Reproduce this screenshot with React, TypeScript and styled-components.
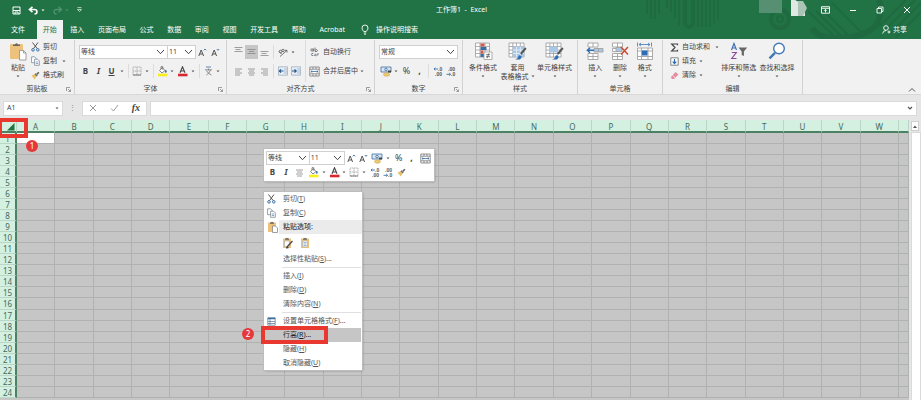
import React from "react";
import styled, { createGlobalStyle } from "styled-components";

const font = `"Noto Sans", "Noto Sans CJK SC", sans-serif`;
const green = "#217346";
const ink = "#444444";
const blue = "#3a6fa5";

const Global = createGlobalStyle`
  * { box-sizing: border-box; }
  body { margin: 0; background: #e6e6e6; overflow: hidden; }
  button, input, select { font: inherit; color: inherit; border: 0; padding: 0; margin: 0; background: none; border-radius: 0; }
  svg { display: block; flex: none; }
`;

const Page = styled.div`
  min-height: 100vh;
  display: flex;
  flex-direction: column;
  font-family: ${font};
  font-size: 7px;
  line-height: 10px;
  color: ${ink};
  white-space: nowrap;
`;

/* ---------- header ---------- */
const Header = styled.header`
  position: relative;
  background: ${green};
  color: #fff;
`;
const Decoration = styled.svg`
  position: absolute;
  right: 0;
  top: 0;
`;
const TitleBar = styled.div`
  position: relative;
  display: grid;
  grid-template-columns: 1fr auto 1fr;
  align-items: center;
  height: 20px;
  padding: 0 10px 0 12px;
`;
const QuickAccess = styled.div`
  display: flex;
  align-items: center;
  gap: 7px;
`;
const WindowButtons = styled.div`
  display: flex;
  justify-content: flex-end;
  gap: 19px;
`;
const PlainButton = styled.button`
  display: flex;
  align-items: center;
  gap: 2px;
`;
const TabBar = styled.nav`
  position: relative;
  display: flex;
  height: 19px;
  padding: 0 14px 0 5px;
`;
const Tab = styled.button<{ $active?: boolean }>`
  padding: 0 6px;
  margin-left: ${(p) => (p.$active ? 4 : 0)}px;
  color: ${(p) => (p.$active ? green : "#fff")};
  background: ${(p) => (p.$active ? "#f1f1f1" : "transparent")};
`;
const TabGroup = styled.div`
  display: flex;
  justify-content: space-between;
  width: 346px;
`;
const TellMe = styled(PlainButton)`
  margin-left: 10px;
  gap: 7px;
`;
const Share = styled(PlainButton)`
  margin-left: auto;
`;

/* ---------- ribbon ---------- */
const Ribbon = styled.div`
  display: flex;
  background: #f1f1f1;
  height: 56px;
  border-bottom: 1px solid #d8d8d8;
`;
const GroupBox = styled.section<{ $w: number }>`
  display: flex;
  flex-direction: column;
  width: ${(p) => p.$w}px;
  flex: none;
  border-right: 1px solid #d2d2d2;
  margin-top: 1px;
`;
const GroupBody = styled.div<{ $pad?: number }>`
  display: flex;
  flex: 1;
  padding: 0 ${(p) => p.$pad ?? 4}px;
`;
const GroupFoot = styled.div`
  display: grid;
  grid-template-columns: 8px 1fr 8px;
  align-items: center;
  height: 10px;
  text-align: center;
`;
const Col = styled.div<{ $pad?: number }>`
  display: flex;
  flex-direction: column;
  justify-content: flex-start;
  padding-top: ${(p) => p.$pad ?? 0}px;
`;
const Tools = styled.div<{ $gap?: number }>`
  display: flex;
  align-items: center;
  height: 14px;
  margin-top: ${(p) => p.$gap ?? 0}px;
`;
const Tool = styled.button<{ $w?: number; $on?: boolean }>`
  display: flex;
  align-items: center;
  justify-content: center;
  width: ${(p) => p.$w ?? 13}px;
  height: 14px;
  background: ${(p) => (p.$on ? "#c6c6c6" : "transparent")};
`;
const Glyph = styled.span<{ $italic?: boolean; $line?: boolean; $bold?: boolean; $size?: number }>`
  font-size: ${(p) => p.$size ?? 8}px;
  font-weight: ${(p) => (p.$bold ? 700 : 400)};
  font-style: ${(p) => (p.$italic ? "italic" : "normal")};
  text-decoration: ${(p) => (p.$line ? "underline" : "none")};
`;
const SerifGlyph = styled(Glyph)`
  font-family: "Liberation Serif", serif;
`;
const Divider = styled.i<{ $tall?: boolean }>`
  width: 1px;
  height: ${(p) => (p.$tall ? 42 : 14)}px;
  margin: 0 ${(p) => (p.$tall ? 3 : 2)}px;
  background: #dcdcdc;
`;
const Row = styled.button`
  display: flex;
  align-items: center;
  height: 14px;
  gap: 3px;
`;
const Big = styled.button<{ $w: number }>`
  display: flex;
  flex-direction: column;
  align-items: center;
  width: ${(p) => p.$w}px;
  height: 42px;
  padding-top: 2px;
  line-height: 9px;
  & > svg:first-child { height: 19px; margin-bottom: 2px; }
`;
const BigLine = styled.span`
  display: flex;
  align-items: center;
  gap: 2px;
  height: 9px;
`;
const Field = styled.label<{ $w: number }>`
  position: relative;
  display: block;
  width: ${(p) => p.$w}px;
  height: 14px;
  background: #fff;
  border: 1px solid #d0d0d0;
  & + & { margin-left: -1px; }
  select { appearance: none; width: 100%; height: 12px; padding-left: 1px; line-height: 12px; }
  svg { position: absolute; right: 2px; top: 3px; pointer-events: none; }
`;
const Collapse = styled.button`
  margin: auto 5px 1px auto;
`;

/* ---------- formula bar ---------- */
const FormulaBar = styled.div`
  display: flex;
  align-items: center;
  gap: 3px;
  height: 25px;
  padding: 1px 4px 0 3px;
`;
const Box = styled.div<{ $w?: number }>`
  display: flex;
  align-items: center;
  justify-content: space-between;
  flex: ${(p) => (p.$w ? `0 0 ${p.$w}px` : "1")};
  height: 15px;
  background: #fff;
  border: 1px solid #dadada;
  padding: 0 3px;
  input { width: 100%; min-width: 0; outline: 0; }
`;
const FxBox = styled(Box)`
  padding: 0 6px;
`;
const Grip = styled.span`
  width: 13px;
  text-align: center;
  color: #888;
`;

/* ---------- sheet ---------- */
const Sheet = styled.main`
  position: relative;
  flex: 1;
  display: flex;
`;
const Grid = styled.table`
  flex: 1;
  table-layout: fixed;
  width: 100%;
  border-collapse: separate;
  border-spacing: 0;
  background: #c6c6c6;
  font-size: 8px;
  line-height: 9px;
  color: #47695a;
  margin-bottom: 2px;
  box-shadow: 0 2px #c6c6c6;
  th { padding: 1px 0 0; font-weight: 400; background: #d3f0e1; }
  td { padding: 0; border-right: 1px solid #b0b1b1; border-bottom: 1px solid #b0b1b1; }
  thead th { height: 13px; padding-top: 2px; border-right: 1px solid #b9d6c7; border-bottom: 2px solid #4c8263; }
  tbody th { border-right: 2px solid #4c8263; border-bottom: 1px solid #b9d6c7; }
`;
const HeadCol = styled.col`
  width: 17px;
`;
const LastCol = styled.col`
  width: 10px;
`;
const Cell = styled.td<{ $active: boolean }>`
  background: ${(p) => (p.$active ? "#fff" : "transparent")};
`;
const Corner = styled.th`
  position: relative;
`;
const SelectAll = styled.button`
  display: flex;
  margin: 0 1px 0 auto;
`;
const Mark = styled.span<{ $x: number; $y: number; $w: number; $h: number }>`
  position: absolute;
  z-index: 2;
  left: ${(p) => p.$x}px;
  top: ${(p) => p.$y}px;
  width: ${(p) => p.$w}px;
  height: ${(p) => p.$h}px;
  border: 4px solid #e8382f;
  pointer-events: none;
`;
const Step = styled.span<{ $x: number; $y: number }>`
  position: absolute;
  z-index: 2;
  left: ${(p) => p.$x}px;
  top: ${(p) => p.$y}px;
  width: 12px;
  height: 12px;
  border-radius: 50%;
  background: #e5383b;
  color: #fff;
  text-align: center;
  font-size: 8px;
  line-height: 12px;
`;
const Scroll = styled.div`
  width: 12px;
  padding: 1px 2px 0;
  button { display: flex; align-items: center; justify-content: center; width: 8px; height: 10px; background: #fff; border: 1px solid #cfcfcf; margin-bottom: 1px; }
  &::after { content: ""; display: block; width: 8px; height: calc(100% - 11px); background: #fff; border: 1px solid #dadada; }
`;
const Popup = styled.div`
  position: absolute;
  left: 264px;
  background: #fff;
  outline: 1px solid #bdbdbd;
  box-shadow: 1px 1px 2px #00000044;
`;
const MiniBar = styled(Popup)`
  top: 29px;
  width: 170px;
  padding: 2px;
`;
const Menu = styled(Popup)`
  top: 72px;
  width: 98px;
`;
const Item = styled.button<{ $hot?: boolean }>`
  position: relative;
  display: grid;
  grid-template-columns: 15px 1fr;
  align-items: center;
  width: 100%;
  height: 14px;
  text-align: left;
  color: ${(p) => (p.$hot ? "#222" : "#555")};
  background: ${(p) => (p.$hot ? "linear-gradient(#c6c6c6, #c6c6c6) 1px 0 / 96px 14px no-repeat" : "none")};
  svg { margin-left: 3px; }
  & > b { grid-column: 2; padding-left: 4px; font-weight: 400; }
`;
const Heading = styled.div`
  display: grid;
  grid-template-columns: 15px 1fr;
  align-items: center;
  height: 14px;
  svg { margin-left: 3px; }
  & > b { height: 14px; line-height: 14px; padding-left: 4px; background: #ebebeb; font-weight: 500; }
`;
const PasteRow = styled.div`
  display: flex;
  align-items: center;
  gap: 6px;
  height: 18px;
  padding-left: 18px;
`;
const MenuLine = styled.hr`
  border: 0;
  height: 1px;
  margin: 1px 1px 1px 18px;
  background: #e0e0e0;
`;

/* ---------- icons ---------- */
type IconProps = { w?: number; h?: number; vb?: string; c?: string; sw?: number; children: React.ReactNode };
const Svg = ({ w = 10, h = 10, vb, c = "#666", sw = 1, children }: IconProps) => (
  <svg width={w} height={h} viewBox={vb ?? `0 0 ${w} ${h}`} fill="none" stroke={c} strokeWidth={sw} aria-hidden="true">
    {children}
  </svg>
);
const Caret = ({ c = "#555" }: { c?: string }) => (
  <Svg w={4} h={3} c="none"><path d="M.5 .5h3L2 2.3z" fill={c} /></Svg>
);
const Chevron = () => <Svg w={9} h={6} c="#444"><path d="M1 1l3.5 3.7L8 1" /></Svg>;
const Launcher = () => (
  <Svg w={5} h={5} c="#777" sw={0.7}><path d="M.5 4V.5H4M2 2l2.3 2.3M4.5 2.4v2.1H2.4" /></Svg>
);
const Scissors = () => (
  <Svg w={9} h={10} c="#555">
    <path d="M1.5 .5l4.600 6M7 .5L2.600 6.500" />
    <circle cx="2" cy="7.800" r="1.300" stroke={blue} /><circle cx="6.800" cy="7.800" r="1.300" stroke={blue} />
  </Svg>
);
const Copy = () => (
  <Svg w={9} h={10} c="#7d8894" sw={0.8}>
    <path d="M.6 .8h3l1.500 1.500v4.400H.6z" fill="#fff" /><path d="M3.600 3.200h3l1.700 1.700v4.400H3.600z" fill="#fff" />
    <path d="M4.800 6h2.300M4.800 7.500h2.300" stroke={blue} strokeWidth=".6" />
  </Svg>
);
const Brush = () => (
  <Svg w={9} h={9} c="none">
    <path d="M.5 4.500l3-1.200 2 2L3.800 8.500z" fill="#eebd62" /><path d="M3.500 3.200l1-1 2.200 2.200-1 1z" fill="#666" />
    <path d="M5.300 2.600L7.400.7l1 1-2 2.200z" fill="#666" />
  </Svg>
);
const PasteIcon = () => (
  <Svg w={18} h={19} c="none">
    <rect x="1" y="2" width="13" height="15" rx="1" fill="#ecc27c" />
    <path d="M4 4V2.500h2Q7.500 0 9 2.500h2V4z" fill="#666" />
    <path d="M10.500 8.500h4l2.500 2.500v7h-6.500z" fill="#fff" stroke="#8b8b8b" strokeWidth=".8" />
    <path d="M14.500 8.500V11H17" stroke="#8b8b8b" strokeWidth=".8" />
  </Svg>
);
const Clip = ({ kind }: { kind?: "page" | "pen" }) => (
  <Svg w={12} h={12} c="none">
    <rect x="1" y="1.500" width="8" height="9.500" rx=".6" fill="#ecc27c" /><path d="M3 2.800V1.500h1Q5 0 6 1.500h1v1.300z" fill="#666" />
    {kind === "page" ? <path d="M5.500 5h3l2 2v4.500h-5z" fill="#fff" stroke="#777" strokeWidth=".7" />
      : <path d="M2.600 4h4.800v5.800H2.600z" fill="#fff" stroke="#8aa0b5" strokeWidth=".5" />}
    {kind === "pen" && <path d="M4.500 10.500L10.500 4M4 11l2.500-.3" stroke="#444" strokeWidth="1.200" />}
    {!kind && <path d="M3.500 5.500h3M3.500 7h3M3.500 8.500h3" stroke={blue} strokeWidth=".5" />}
  </Svg>
);
const FontStep = ({ down }: { down?: boolean }) => (
  <Svg w={9} h={9} c="#444" sw={0.9}>
    <path d="M.8 8l2.400-6 2.400 6M1.700 6h3" /><path d={down ? "M5.800 1l1.200 1.300L8.200 1" : "M5.800 2.300L7 1l1.200 1.300"} stroke={blue} />
  </Svg>
);
const Borders = () => (
  <Svg w={10} h={10} c="#a5a5a5" sw={0.8}><path d="M1 1h8v8H1zM5 1v8M1 5h8" strokeDasharray="1.500 .5" /><path d="M1 9h8" stroke="#666" /></Svg>
);
const FillColor = () => (
  <Svg w={11} h={11} c="#666" sw={0.8}>
    <path d="M2.500 4.500L5.500 1.700 8 4.500 5 7z" fill="#fff" /><path d="M4 3V.7h1.800v3" /><path d="M8.700 4q1.400 2 .3 2.500T8.700 4" fill={blue} stroke={blue} />
    <path d="M1 9h9.500" stroke="#f7ee1c" strokeWidth="2.600" />
  </Svg>
);
const FontColor = () => (
  <Svg w={11} h={11} c="#444" sw={1.1}><path d="M3 6.800L5.500 .8 8 6.800M3.800 5h3.400" /><path d="M1 9h9.500" stroke="#d8262c" strokeWidth="2.600" /></Svg>
);
const Phonetic = () => (
  <Svg w={9} h={10} c="#777" sw={0.8}><path d="M1 3.800h7M4.500 2.500v2M2.300 9Q5.500 7.500 6.500 4M2.500 4.500Q4 8 7.500 9" /><path d="M2 1h5" stroke={blue} /></Svg>
);
const Lines = ({ y = 1, center }: { y?: number; center?: boolean }) => (
  <Svg w={9} h={10} c="#888" sw={0.8}>
    <path d={`M.5 ${y + 0.5}h8M${center ? 2 : 1.5} ${y + 2.5}h5M.5 ${y + 4.5}h8`} />
  </Svg>
);
const AlignText = ({ side }: { side: "l" | "c" | "r" }) => {
  const x = side === "l" ? 1 : side === "c" ? 2 : 3;
  return <Svg w={9} h={9} c="#888" sw={0.8}><path d={`M1 2h7M${x} 4h5M1 6h7M${x} 8h5`} /></Svg>;
};
const Orient = () => (
  <Svg w={10} h={9} c="#555" sw={0.8}><path d="M2 8.500L8.800 2.500M6.800 2.300h2.200v2.200M1 3.500l2.500 2.500" /><circle cx="2.500" cy="3.500" r="1.300" /><circle cx="5" cy="2.500" r="1.200" /></Svg>
);
const Indent = ({ out }: { out?: boolean }) => (
  <Svg w={10} h={10} c="#9fb0c2" sw={0.8}>
    <path d="M.5 .8h9v8.400h-9zM6 3h3M6 5h3M6 7h3" fill="#e6edf5" /><path d={out ? "M5.500 5h-4M3 3.300L1.300 5 3 6.700" : "M1 5h4M3.500 3.300L5.200 5 3.500 6.700"} stroke="#245a94" strokeWidth="1.200" />
  </Svg>
);
const Wrap = () => (
  <Svg w={11} h={10} vb="-1 0 11 10" c="#666" sw={0.8}><circle cx="2" cy="3" r="1.200" /><path d="M3.400 1.500v3M5 .5v4M5 3q2.500-1 2.500.5T5 4.500M3.300 6.500q-2-.5-2 1t2 1M4.500 8H8V6" /><path d="M5.800 6.800L4.500 8l1.300 1.300" stroke={blue} /></Svg>
);
const Merge = () => (
  <Svg w={11} h={11} c="#777" sw={0.8}>
    <path d="M.8 1h9.400v9H.8zM.8 3.200h9.400M.8 7.800h9.400M4 1v2M7 1v2M4 8v2M7 8v2" fill="#fff" /><path d="M2 5.500h7M3.300 4.300L2 5.500l1.300 1.200M7.700 4.300L9 5.500 7.700 6.700" stroke={blue} />
  </Svg>
);
const Money = () => (
  <Svg w={12} h={11} c={blue} sw={0.8}>
    <path d="M1 1h10v5H1z" fill="#dbe6f2" /><circle cx="6" cy="3.500" r="1.300" /><path d="M8 4.500h3v2H8z" fill="#444" stroke="none" /><ellipse cx="6.500" cy="8.500" rx="3" ry="1.700" fill="#efcb72" stroke="#c9a24c" strokeWidth=".6" />
  </Svg>
);
const DecimalMark = styled.text`
  font: 700 5px "Liberation Sans", sans-serif;
  fill: #555;
  stroke: none;
`;
const Decimal = ({ dec }: { dec?: boolean }) => (
  <Svg w={10} h={11} c={blue} sw={0.9}>
    <DecimalMark x={dec ? 2 : 5} y="5">{dec ? ".00" : ".0"}</DecimalMark><DecimalMark x={dec ? 5 : 2} y="10">{dec ? ".0" : ".00"}</DecimalMark>
    <path d={dec ? "M.5 8.300h4M3.200 7l1.400 1.300-1.400 1.300" : "M5 3H1M2.300 1.700L1 3l1.300 1.300"} />
  </Svg>
);
const CondFmt = () => (
  <Svg w={19} h={19} c="#9a9a9a" sw={0.8}>
    <path d="M1.500 1h14v14h-14zM1.500 4.500h14M1.500 8h14M1.500 11.500h14M6 1v14M11 1v14" fill="#fff" />
    <path d="M6.500 1.500h4v3h-4z" fill="#d65a4b" stroke="none" /><path d="M6.500 5h6v3h-6z" fill={blue} stroke="none" /><path d="M6.500 8.500h3v3h-3z" fill="#d65a4b" stroke="none" /><path d="M6.500 12h4v3h-4z" fill={blue} stroke="none" />
    <path d="M10 10h8v7.500h-8z" fill="#fff" /><path d="M12 12.700h4M12 14.700h4M15 11.300l-2 5" stroke="#555" />
  </Svg>
);
const TableFmt = ({ single }: { single?: boolean }) => (
  <Svg w={19} h={19} c="#9a9a9a" sw={0.8}>
    <path d="M1 1h15v14H1zM1 4.500h15M1 8h15M1 11.500h15M4.800 1v14M8.500 1v14M12.300 1v14" fill="#fff" />
    <path d={single ? "M4 4.500h9v6H4z" : "M4.800 4.500h11.500v10.500H4.800z"} fill="#a9c8e6" stroke="none" />
    {!single && <path d="M4.800 8h11M4.800 11.500h11M8.500 4.500v10M12.300 4.500v10" stroke="#e8f1fa" />}
    <path d="M17.800 6l-5 6" stroke="#555" strokeWidth="2" /><path d="M6.500 17.500q3-.3 4-3.500.8-1.500 2.500-.3T12 17.500z" fill="#2d6db3" stroke="none" />
  </Svg>
);
const InsertCells = () => (
  <Svg w={18} h={19} c="#a2a2a2" sw={0.9}>
    <path d="M2 1h10v4H2zM7 1v4M2 11.500h10v6H2zM7 11.500v6M2 14.500h10" fill="#fff" /><path d="M8 6.500h9v3.500H8zM12.500 6.500v3.500" fill="#a9c8e6" /><path d="M8 8.300H1.300M4 5.800L1.300 8.300 4 10.800" stroke="#2d6db3" strokeWidth="1.400" />
  </Svg>
);
const DeleteCells = () => (
  <Svg w={18} h={19} c="#a2a2a2" sw={0.9}>
    <path d="M1.500 1h10v4h-10zM6.500 1v4M1.500 11.500h10v6h-10zM6.500 11.500v6M1.500 14.500h10M1.500 6.500h5v3h-5z" fill="#fff" /><path d="M5 5.500h6v4H5z" fill="#a9c8e6" /><path d="M10 5l7 7.500M17 5l-7 7.500" stroke="#d0492f" strokeWidth="1.500" />
  </Svg>
);
const FormatCells = () => (
  <Svg w={18} h={19} c="#a2a2a2" sw={0.9}>
    <path d="M1.500 6h15v11.500h-15zM1.500 9h15M1.500 14.500h15M5.500 6v11.500M12 6v11.500" fill="#fff" /><path d="M6 8.500h5.500v5H6z" fill="#2d6db3" stroke="none" /><path d="M3 2.500h11M5 1L3 2.500 5 4M12 1l2 1.500L12 4M1.500 .5v4M15.500 .5v4" stroke="#4f86bd" />
  </Svg>
);
const Sigma = () => <Svg w={9} h={9} c="#444" sw={1.2}><path d="M7.500 2.300V1H1.700L5 4.500 1.700 8h5.800V6.700" /></Svg>;
const FillDown = () => (
  <Svg w={9} h={9} c="#777" sw={0.9}><path d="M.8 .8h7.400v7.400H.8z" fill="#fff" /><path d="M4.500 2v4.500M2.700 4.700l1.800 1.900 1.800-1.900" stroke="#2d6db3" strokeWidth="1.200" /></Svg>
);
const Eraser = () => <Svg w={9} h={9} c="none"><path d="M.8 6.200L5.600 1l2.800 2.400L4 8H2z" fill="#e58a9f" /><path d="M2.500 4.300L5.200 6.800" stroke="#fff" strokeWidth=".7" /></Svg>;
const Sort = () => (
  <Svg w={18} h={19}><path d="M1.500 8L4 1.500 6.500 8M2.400 6h3.200" stroke="#3d6fb4" strokeWidth="1.200" /><path d="M1.800 10.500h4.500L1.800 16.500h4.700" stroke="#8d4a9c" strokeWidth="1.200" /><path d="M8.500 5.500h8.700l-3.300 4v4.500l-2.200-1V9.500z" fill="#666" stroke="none" /></Svg>
);
const Find = () => <Svg w={18} h={19} c="#4279b5"><circle cx="11" cy="6.500" r="5.300" strokeWidth="1.400" fill="#fff" /><path d="M7 10.800L1.500 16.300" strokeWidth="2.400" /></Svg>;

const Combo = ({ w, label, value }: { w: number; label: string; value: string }) => (
  <Field $w={w}><select aria-label={label} defaultValue={value}><option>{value}</option></select><Chevron /></Field>
);
const Drop = ({ label }: { label: string }) => <Tool $w={8} aria-label={label}><Caret /></Tool>;

type GroupProps = { w: number; title: string; launcher?: boolean; pad?: number; children: React.ReactNode };
const Group = ({ w, title, launcher, pad, children }: GroupProps) => (
  <GroupBox $w={w} aria-label={title}>
    <GroupBody $pad={pad}>{children}</GroupBody>
    <GroupFoot><span /><span>{title}</span>{launcher && <PlainButton aria-label={`${title}设置`}><Launcher /></PlainButton>}</GroupFoot>
  </GroupBox>
);

const tabs = ["文件", "开始", "插入", "页面布局", "公式", "数据", "审阅", "视图", "开发工具", "帮助", "Acrobat"];
const columns = "ABCDEFGHIJKLMNOPQRSTUVW".split("");
const rows = Array.from({ length: 24 }, (_, i) => i + 1);

const MenuItem = ({ text, k, dots, icon, hot, children }: { text: string; k: string; dots?: boolean; icon?: React.ReactNode; hot?: boolean; children?: React.ReactNode }) => (
  <Item $hot={hot} role="menuitem">{icon}<b>{text}(<u>{k}</u>){dots && "..."}</b>{children}</Item>
);

const HeaderArt = () => (
  <Decoration width="281" height="39" viewBox="0 0 281 39" fill="none" aria-hidden="true">
    <g stroke="#1f6a41" strokeWidth="2">
      <path d="M7 0v14M11 0v19M15 0v19M19 0v14M27 0v8M31 0v12M35 0v18M39 0v26M58 0v27M62 0v27M66 0v27M70 0v27M74 0v24M78 0v20" />
      <path d="M45 0v24q4 6 8 0V0" strokeWidth="4" />
      <path d="M168 11l26 25M176 11l26 26M184 11l26 26M192 3l30 30M239 27L266 0M245 30L275 0M250 34L281 3M256 37l25-25" />
    </g>
    <circle cx="140" cy="19" r="9" stroke="#1f6a41" strokeWidth="4" />
    <circle cx="140" cy="19" r="3" stroke="#1f6a41" strokeWidth="2" />
    <path d="M172 28q6 10 22 10 36 0 44-16 5-12 1-22" stroke="#1f6a41" strokeWidth="6" />
    <path d="M119 0h23v13h-23z" fill="#568f71" />
    <path d="M151 0h4l10 5v11h-14z" fill="#dfe8e3" /><path d="M158 1h5l4 7-4 8h-5z" fill="#a9c4b5" />
  </Decoration>
);

export default function App() {
  return (
    <Page>
      <Global />
      <Header>
        <HeaderArt />
        <TitleBar>
          <QuickAccess>
            <PlainButton aria-label="保存"><Svg w={9} h={9} c="#fff"><path d="M1 1h7v7H1zM1 4.500h7M3 8V6h3v2" /></Svg></PlainButton>
            <PlainButton aria-label="撤消"><Svg w={11} h={9} c="#fff" sw={1.6}><path d="M4.500 .8L1.500 3.500l3 2.700M1.800 3.500H6q3 0 3 2.200T6.500 8" /></Svg><Caret c="#fff" /></PlainButton>
            <PlainButton aria-label="恢复"><Svg w={11} h={9} c="#4e9470" sw={1.3}><path d="M6.500 .8l3 2.700-3 2.700M9.200 3.500H5q-3 0-3 2.200T4.500 8" /></Svg><Caret c="#4e9470" /></PlainButton>
            <PlainButton aria-label="自定义"><Svg w={7} h={6} c="#cfe3d8" sw={0.8}><path d="M1.500 .6h4M1.500 2.500h4l-2 2.200z" /></Svg></PlainButton>
          </QuickAccess>
          <span>工作簿1&nbsp; - &nbsp;Excel</span>
          <WindowButtons>
            <PlainButton aria-label="功能区显示选项"><Svg w={9} h={8} c="#fff" sw={0.9}><path d="M.5 .7h8v6.500h-8zM.5 2.300h8M4.500 6.500V3.500M3.200 4.700l1.300-1.300 1.300 1.300" /></Svg></PlainButton>
            <PlainButton aria-label="最小化"><Svg w={8} h={8} c="#fff"><path d="M1 4.500h6" /></Svg></PlainButton>
            <PlainButton aria-label="还原"><Svg w={8} h={8} c="#fff" sw={0.9}><path d="M1 2.500h4.500V7H1zM2.500 2.500V1H7v4.500H5.500" /></Svg></PlainButton>
            <PlainButton aria-label="关闭"><Svg w={8} h={8} c="#fff"><path d="M1 1l6 6M7 1L1 7" /></Svg></PlainButton>
          </WindowButtons>
        </TitleBar>
        <TabBar>
          <TabGroup>{tabs.map((t) => <Tab key={t} $active={t === "开始"}>{t}</Tab>)}</TabGroup>
          <TellMe><Svg w={8} h={11} c="#fff" sw={0.9}><path d="M2.800 7.500Q1 5.800 1 4a3 3 0 0 1 6 0Q7 5.800 5.200 7.500zM2.800 9h2.400M3.200 10.300h1.600" /></Svg>操作说明搜索</TellMe>
          <Share><Svg w={9} h={9} c="#fff" sw={0.9}><circle cx="4" cy="3" r="2.300" /><path d="M.7 8.500Q1 5.500 4 5.500M5.500 7h3M7 5.500v3" /></Svg>共享</Share>
        </TabBar>
      </Header>

      <Ribbon>
        <Group w={75} title="剪贴板" launcher pad={5}>
          <Big $w={26}><PasteIcon /><BigLine>粘贴</BigLine><BigLine><Caret /></BigLine></Big>
          <Col>
            <Row><Scissors />剪切</Row>
            <Row><Copy />复制&nbsp; <Caret /></Row>
            <Row><Brush />格式刷</Row>
          </Col>
        </Group>
        <Group w={152} title="字体" launcher>
          <Col $pad={5}>
            <Tools>
              <Combo w={89} label="字体" value="等线" /><Combo w={29} label="字号" value="11" />
              <Tool aria-label="增大字号"><FontStep /></Tool><Tool aria-label="减小字号"><FontStep down /></Tool>
            </Tools>
            <Tools $gap={5}>
              <Tool aria-label="加粗"><Glyph $bold>B</Glyph></Tool><Tool aria-label="倾斜"><Glyph $bold $italic>I</Glyph></Tool>
              <Tool aria-label="下划线"><Glyph $bold $line>U</Glyph></Tool><Drop label="下划线选项" /><Divider />
              <Tool $w={12} aria-label="边框"><Borders /></Tool><Drop label="边框选项" /><Divider />
              <Tool $w={12} aria-label="填充颜色"><FillColor /></Tool><Drop label="填充选项" />
              <Tool aria-label="字体颜色"><FontColor /></Tool><Drop label="颜色选项" /><Divider />
              <Tool $w={12} aria-label="拼音"><Phonetic /></Tool><Drop label="拼音选项" />
            </Tools>
          </Col>
        </Group>
        <Group w={148} title="对齐方式" launcher pad={5}>
          <Col $pad={5}>
            <Tools>
              <Tool aria-label="顶端对齐"><Lines y={0} /></Tool><Tool $on aria-label="垂直居中"><Lines y={2} center /></Tool><Tool aria-label="底端对齐"><Lines y={4} /></Tool>
              <Divider /><Tool aria-label="方向"><Orient /></Tool><Drop label="方向选项" />
            </Tools>
            <Tools $gap={5}>
              <Tool aria-label="左对齐"><AlignText side="l" /></Tool><Tool aria-label="居中"><AlignText side="c" /></Tool><Tool aria-label="右对齐"><AlignText side="r" /></Tool>
              <Divider /><Tool aria-label="减少缩进"><Indent out /></Tool><Tool aria-label="增加缩进"><Indent /></Tool>
            </Tools>
          </Col>
          <Divider $tall />
          <Col $pad={5}>
            <Tools><Row><Wrap />自动换行</Row></Tools>
            <Tools $gap={5}><Row><Merge />合并后居中</Row><Drop label="合并选项" /></Tools>
          </Col>
        </Group>
        <Group w={88} title="数字" launcher>
          <Col $pad={5}>
            <Tools><Combo w={79} label="数字格式" value="常规" /></Tools>
            <Tools $gap={5}>
              <Tool aria-label="会计格式"><Money /></Tool><Drop label="会计选项" /><Tool aria-label="百分比"><Glyph $size={9}>%</Glyph></Tool>
              <Tool aria-label="千位分隔"><Glyph $bold $size={9}>,</Glyph></Tool><Divider /><Tool aria-label="增加小数位"><Decimal /></Tool><Tool aria-label="减少小数位"><Decimal dec /></Tool>
            </Tools>
          </Col>
        </Group>
        <Group w={115} title="样式">
          <Big $w={32}><CondFmt /><BigLine>条件格式</BigLine><BigLine><Caret /></BigLine></Big>
          <Big $w={37}><TableFmt /><BigLine>套用</BigLine><BigLine>表格格式<Caret /></BigLine></Big>
          <Big $w={37}><TableFmt single /><BigLine>单元格样式</BigLine><BigLine><Caret /></BigLine></Big>
        </Group>
        <Group w={85} title="单元格" pad={5}>
          <Big $w={25}><InsertCells /><BigLine>插入</BigLine><BigLine><Caret /></BigLine></Big>
          <Big $w={25}><DeleteCells /><BigLine>删除</BigLine><BigLine><Caret /></BigLine></Big>
          <Big $w={25}><FormatCells /><BigLine>格式</BigLine><BigLine><Caret /></BigLine></Big>
        </Group>
        <Group w={140} title="编辑" pad={7}>
          <Col>
            <Row><Sigma />自动求和&nbsp; <Caret /></Row>
            <Row><FillDown />填充<Caret /></Row>
            <Row><Eraser />清除<Caret /></Row>
          </Col>
          <Big $w={41}><Sort /><BigLine>排序和筛选</BigLine><BigLine><Caret /></BigLine></Big>
          <Big $w={37}><Find /><BigLine>查找和选择</BigLine><BigLine><Caret /></BigLine></Big>
        </Group>
        <Collapse aria-label="折叠功能区"><Svg w={8} h={6} c="#555"><path d="M1 4.500l3-3 3 3" /></Svg></Collapse>
      </Ribbon>

      <FormulaBar>
        <Box $w={60}><input aria-label="名称框" defaultValue="A1" /><Caret /></Box>
        <Grip>⋮</Grip>
        <FxBox $w={65}>
          <PlainButton aria-label="取消"><Svg w={8} h={8} c="#999"><path d="M1 1l6 6M7 1L1 7" /></Svg></PlainButton>
          <PlainButton aria-label="输入"><Svg w={9} h={8} c="#999"><path d="M1 4.500L3.500 7 8 1" /></Svg></PlainButton>
          <PlainButton aria-label="插入函数"><SerifGlyph $italic $bold $size={10}>fx</SerifGlyph></PlainButton>
        </FxBox>
        <Box><input aria-label="编辑栏" /><Svg w={6} h={5} c="#555" sw={1.2}><path d="M1 1l2 2 2-2" /></Svg></Box>
      </FormulaBar>

      <Sheet>
        <Grid>
          <colgroup><HeadCol />{columns.map((c) => <col key={c} />)}<LastCol /></colgroup>
          <thead>
            <tr>
              <Corner>
                <SelectAll aria-label="全选"><Svg w={9} h={9} c="none"><path d="M8.500 1v7.500H1z" fill={green} /></Svg></SelectAll>
                <Mark $x={-2} $y={-2} $w={30} $h={20} />
                <Step $x={26} $y={20}>1</Step>
              </Corner>
              {columns.map((c) => <th key={c} scope="col">{c}</th>)}
              <th />
            </tr>
          </thead>
          <tbody>
            {rows.map((r) => (
              <tr key={r}>
                <th scope="row">{r}</th>
                {columns.map((c) => <Cell key={c} $active={r === 1 && c === "A"} />)}
                <td />
              </tr>
            ))}
          </tbody>
        </Grid>
        <Scroll><button aria-label="向上滚动"><Svg w={4} h={3} c="none"><path d="M0 3h4L2 .5z" fill="#555" /></Svg></button></Scroll>

        <MiniBar role="toolbar" aria-label="浮动工具栏">
          <Tools>
            <Combo w={44} label="字体" value="等线" /><Combo w={36} label="字号" value="11" />
            <Tool aria-label="增大字号"><FontStep /></Tool><Tool aria-label="减小字号"><FontStep down /></Tool>
            <Tool $w={14} aria-label="会计格式"><Money /></Tool><Drop label="会计选项" />
            <Tool aria-label="百分比"><Glyph $size={9}>%</Glyph></Tool><Tool aria-label="千位分隔"><Glyph $bold $size={9}>,</Glyph></Tool><Tool $w={14} aria-label="合并后居中"><Merge /></Tool>
          </Tools>
          <Tools>
            <Tool aria-label="加粗"><Glyph $bold>B</Glyph></Tool><Tool $w={14} aria-label="倾斜"><Glyph $bold $italic>I</Glyph></Tool>
            <Tool aria-label="居中"><AlignText side="c" /></Tool><Tool $w={14} aria-label="填充颜色"><FillColor /></Tool><Drop label="填充选项" />
            <Tool $w={12} aria-label="字体颜色"><FontColor /></Tool><Drop label="颜色选项" /><Tool $w={12} aria-label="边框"><Borders /></Tool><Drop label="边框选项" />
            <Tool aria-label="增加小数位"><Decimal /></Tool><Tool aria-label="减少小数位"><Decimal dec /></Tool><Tool $w={14} aria-label="格式刷"><Brush /></Tool>
          </Tools>
        </MiniBar>

        <Menu role="menu">
          <MenuItem text="剪切" k="T" icon={<Scissors />} />
          <MenuItem text="复制" k="C" icon={<Copy />} />
          <Heading><Clip kind="page" /><b>粘贴选项:</b></Heading>
          <PasteRow><PlainButton aria-label="粘贴"><Clip kind="pen" /></PlainButton><PlainButton aria-label="粘贴值"><Clip /></PlainButton></PasteRow>
          <MenuItem text="选择性粘贴" k="S" dots />
          <MenuLine />
          <MenuItem text="插入" k="I" />
          <MenuItem text="删除" k="D" />
          <MenuItem text="清除内容" k="N" />
          <MenuLine />
          <MenuItem text="设置单元格格式" k="F" dots icon={<Svg w={9} h={9} c="#6b7f9a" sw={0.8}><path d="M.8 .8h7.400v7.400H.8zM3 2v6M1 4.500h7M1 6.500h7" fill="#fff" /><path d="M.8 1.500h7.400" stroke={blue} strokeWidth="1.500" /></Svg>} />
          <MenuItem text="行高" k="R" dots hot><Mark $x={-3} $y={-2} $w={67} $h={18} /><Step $x={-22} $y={0}>2</Step></MenuItem>
          <MenuItem text="隐藏" k="H" />
          <MenuItem text="取消隐藏" k="U" />
        </Menu>
      </Sheet>
    </Page>
  );
}
